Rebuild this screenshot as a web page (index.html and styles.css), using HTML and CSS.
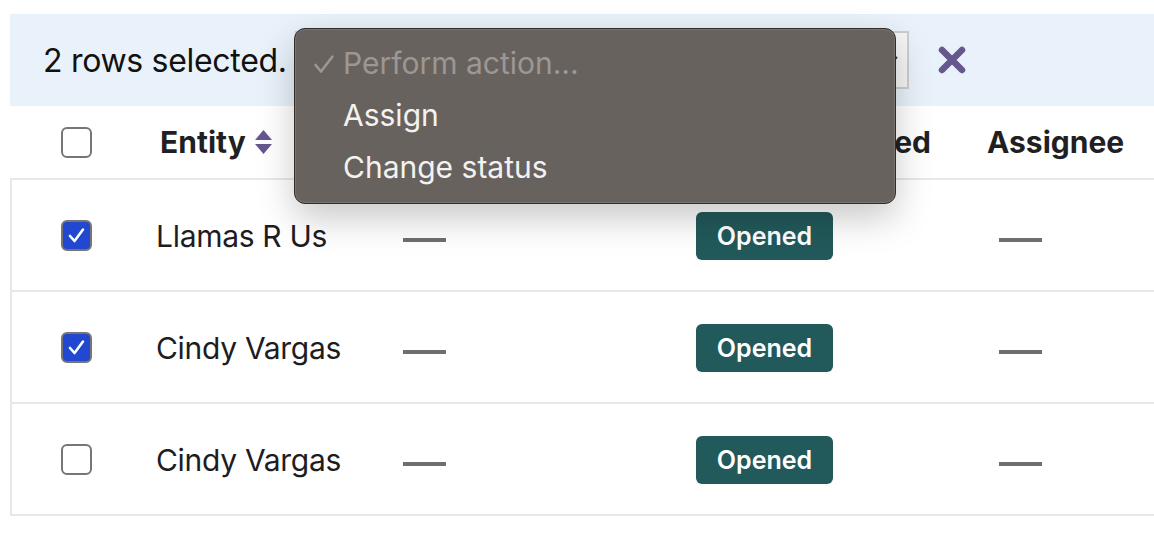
FILE: index.html
```html
<!DOCTYPE html>
<html lang="en">
<head>
  <meta charset="UTF-8" />
  <meta name="viewport" content="width=device-width, initial-scale=1.0"/>
  <title>Cases</title>
  <link rel="stylesheet" href="styles.css">
</head>
<body>
  <div class="page">
    <div class="bulk-bar">
      <span class="count">2 rows selected.</span>
      <div class="action-select">
        <svg class="chev" width="14" height="10" viewBox="0 0 14 10"><path d="M2 2 L7 7 L12 2" fill="none" stroke="#333" stroke-width="2"/></svg>
      </div>
      <button class="clear" aria-label="Clear selection">
        <svg width="30" height="28" viewBox="0 0 30 28"><path d="M5 4 L25 24 M25 4 L5 24" stroke="#67578f" stroke-width="6.5" stroke-linecap="round"/></svg>
      </button>
    </div>

    <div class="table">
      <div class="row head">
        <div class="cell check"><span class="box"></span></div>
        <div class="cell entity">Entity
          <svg class="sort" width="19" height="26" viewBox="0 0 19 26"><path d="M9.5 1 L18 11 L1 11 Z M1 15 L18 15 L9.5 25 Z" fill="#67578f"/></svg>
        </div>
        <div class="cell"></div>
        <div class="cell opened-col">Updated</div>
        <div class="cell assignee">Assignee</div>
      </div>

      <div class="rows">
        <div class="row">
          <div class="cell check"><span class="box checked"></span></div>
          <div class="cell name">Llamas R Us</div>
          <div class="cell"><span class="dash"></span></div>
          <div class="cell"><span class="badge">Opened</span></div>
          <div class="cell assignee-val"><span class="dash"></span></div>
        </div>
        <div class="row">
          <div class="cell check"><span class="box checked"></span></div>
          <div class="cell name">Cindy Vargas</div>
          <div class="cell"><span class="dash"></span></div>
          <div class="cell"><span class="badge">Opened</span></div>
          <div class="cell assignee-val"><span class="dash"></span></div>
        </div>
        <div class="row">
          <div class="cell check"><span class="box"></span></div>
          <div class="cell name">Cindy Vargas</div>
          <div class="cell"><span class="dash"></span></div>
          <div class="cell"><span class="badge">Opened</span></div>
          <div class="cell assignee-val"><span class="dash"></span></div>
        </div>
      </div>
    </div>

    <!-- native select popup, open -->
    <ul class="select-menu">
      <li class="placeholder">
        <svg class="tick" width="22" height="22" viewBox="0 0 22 22"><path d="M2.5 12 L8 18.5 L19.5 3.5" fill="none" stroke="#9d9793" stroke-width="2.6" stroke-linecap="round" stroke-linejoin="round"/></svg>
        Perform action...
      </li>
      <li>Assign</li>
      <li>Change status</li>
    </ul>
  </div>
</body>
</html>
```

FILE: styles.css
```css
* {
  margin: 0;
  padding: 0;
  box-sizing: border-box;
}

body {
  font-family: 'Inter', 'Noto Sans', sans-serif;
  background: #fff;
  color: #1d1d1f;
  overflow: hidden;
}

.page {
  position: relative;
  padding: 14px 0 0 10px;
}

.bulk-bar {
  display: flex;
  align-items: center;
  height: 92px;
  background: #e9f2fa;
  padding-left: 33px;
}

.count {
  font-size: 32px;
  color: #111;
  letter-spacing: -0.3px;
}

.action-select {
  display: flex;
  justify-content: flex-end;
  align-items: center;
  width: 614px;
  height: 58px;
  margin-left: 8px;
  padding-right: 8px;
  background: #f6f6f6;
  border: 2px solid #cdcdcd;
}

.clear {
  background: none;
  border: none;
  margin-left: 28px;
  display: flex;
  cursor: pointer;
}

.table {
  font-size: 30px;
}

.row {
  display: grid;
  grid-template-columns: 146px 247px 293px 291px 1fr;
  align-items: center;
  height: 112px;
  border-bottom: 2px solid #e8e8e8;
}

.row.head {
  height: 74px;
  font-weight: 700;
  color: #1f1f24;
}

.rows {
  border-left: 2px solid #e8e8e8;
}

.rows .row {
  margin-left: -2px;
}

.cell {
  display: flex;
  align-items: center;
}

.check {
  padding-left: 51px;
}

.box {
  display: block;
  width: 31px;
  height: 31px;
  border: 2px solid #767676;
  border-radius: 6px;
  background: #fff;
}

.box.checked {
  background: #2248d2 url("data:image/svg+xml,%3Csvg xmlns='http://www.w3.org/2000/svg' viewBox='0 0 27 27'%3E%3Cpath d='M7 14 L11.5 19 L20 7.5' fill='none' stroke='white' stroke-width='2.6' stroke-linecap='round' stroke-linejoin='round'/%3E%3C/svg%3E") center / 100% no-repeat;
}

.entity {
  padding-left: 4px;
  gap: 8px;
}

.opened-col {
  justify-content: flex-end;
  padding-right: 56px;
}

.assignee-val {
  padding-left: 12px;
}

.name {
  color: #1d1d1f;
  letter-spacing: -0.3px;
  padding-top: 2px;
}

.dash {
  display: block;
  width: 43px;
  height: 4px;
  margin-top: 10px;
  background: #6f6f6f;
}

.badge {
  display: inline-flex;
  align-items: center;
  justify-content: center;
  width: 137px;
  height: 48px;
  margin-top: 2px;
  border-radius: 6px;
  background: #22595a;
  color: #fff;
  font-size: 25px;
  font-weight: 600;
}

.select-menu {
  position: absolute;
  left: 294px;
  top: 28px;
  width: 602px;
  height: 176px;
  list-style: none;
  padding-top: 8px;
  background: #68625f;
  border: 1px solid #2f2b29;
  border-radius: 11px;
  box-shadow: inset 0 0 0 1px rgba(255, 255, 255, 0.12), 0 14px 36px rgba(0, 0, 0, 0.22);
  font-size: 30px;
  color: #f4f2f0;
}

.select-menu li {
  position: relative;
  height: 52px;
  line-height: 52px;
  padding-left: 48px;
}

.select-menu .placeholder {
  color: #9d9793;
}

.tick {
  position: absolute;
  left: 18px;
  top: 16px;
}
```
